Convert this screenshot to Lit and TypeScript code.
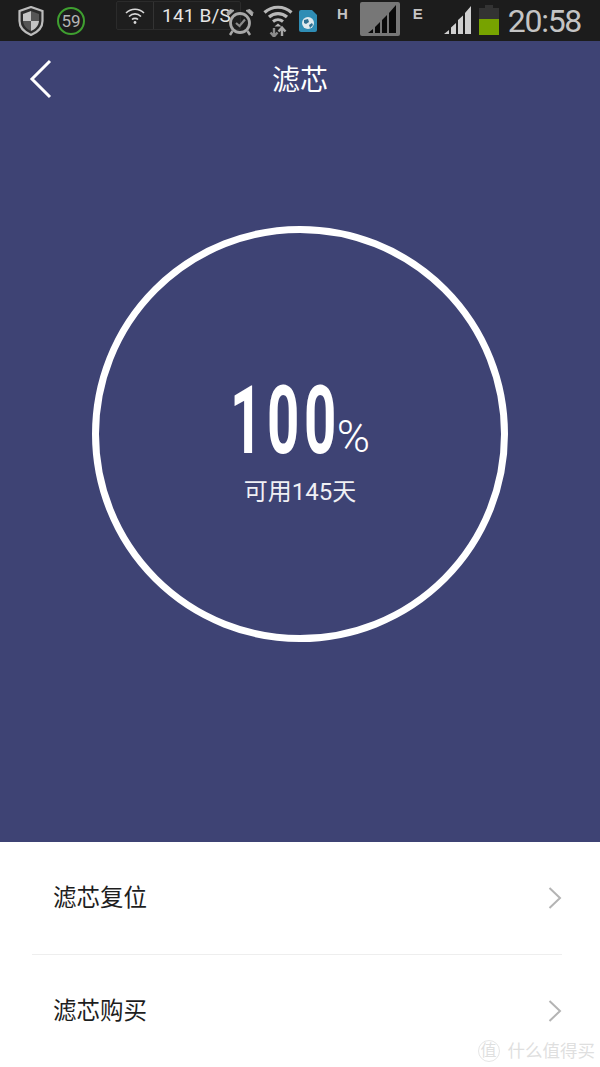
import { LitElement, html, css, svg } from 'lit';
import { customElement } from 'lit/decorators.js';

const shield = svg`<svg class="ic" width="26" height="30" viewBox="0 0 26 30">
  <path d="M13 1 L24.5 5 V15 C24.5 22 19 26.5 13 29 C7 26.5 1.5 22 1.5 15 V5 Z" fill="#2a2a2a" stroke="#bdbdbd" stroke-width="2.2"/>
  <path d="M13 5 L5 8 V15 H13 Z" fill="#c4c4c4"/>
  <path d="M13 5 L21 8 V15 H13 Z" fill="#555"/>
  <path d="M5 15 H13 V25 C9 23.5 5.5 20 5 15 Z" fill="#555"/>
  <path d="M21 15 H13 V25 C17 23.5 20.5 20 21 15 Z" fill="#c4c4c4"/>
</svg>`;

const wifiSmall = svg`<svg width="20" height="18" viewBox="0 0 20 18" fill="none" stroke="#d8d8d8" stroke-width="1.6">
  <path d="M1 6 C6 1 14 1 19 6"/><path d="M4 9.5 C7.5 6 12.5 6 16 9.5"/><path d="M7 12.5 C8.5 11 11.5 11 13 12.5"/>
  <circle cx="10" cy="15.5" r="1.4" fill="#d8d8d8" stroke="none"/>
</svg>`;

const alarm = svg`<svg class="ic" width="28" height="28" viewBox="0 0 28 28" fill="none" stroke="#a8a8a8">
  <circle cx="14" cy="15" r="9.5" stroke-width="2.8"/>
  <path d="M2 8 L8 2.5 L4 1.5 L1 4.5 Z M26 8 L20 2.5 L24 1.5 L27 4.5 Z" fill="#a8a8a8" stroke-width="1"/>
  <path d="M10 15 L13.5 18 L19 11.5" stroke-width="2.2" stroke="#8a8a8a"/>
  <path d="M6.5 23 L4 27 M21.5 23 L24 27" stroke-width="2.4"/>
</svg>`;

const wifiTransfer = svg`<svg class="ic" width="30" height="32" viewBox="0 0 30 32" fill="none" stroke="#b8b8b8">
  <path d="M1.5 7.5 C9 0.5 21 0.5 28.5 7.5" stroke-width="3.2"/>
  <path d="M6 12 C11 7.5 19 7.5 24 12" stroke-width="3.2"/>
  <path d="M10 16.5 C13 14 17 14 20 16.5" stroke-width="3"/>
  <path d="M15 18.5 L11.5 21.5 H18.5 Z" fill="#b8b8b8" stroke="none"/>
  <path d="M11 23 V31 M7.5 27.5 L11 31.5 L14.5 27.5" stroke="#8c8c8c" stroke-width="2.4"/>
  <path d="M19 31 V23 M15.5 26.5 L19 22.5 L22.5 26.5" stroke="#a8a8a8" stroke-width="2.4"/>
</svg>`;

const sdGlobe = svg`<svg class="ic" width="20" height="24" viewBox="0 0 20 24">
  <path d="M1 3 Q1 1 3 1 H14 L19 6 V21 Q19 23 17 23 H3 Q1 23 1 21 Z" fill="#2f8db5"/>
  <circle cx="10" cy="14" r="6" fill="#dfe9ee"/>
  <path d="M6 11 L10 10 L11 13 L8 15 L6 14 Z M11 16 L14 14 L15 16 L12 19 Z" fill="#2f6f90"/>
</svg>`;

const cellBox = svg`<svg width="40" height="34" viewBox="0 0 40 34">
  <rect width="40" height="34" rx="2" fill="#777"/>
  <path d="M8 31 L13 27 V31 Z M15 31 V25 L20 20 V31 Z M22 31 V18 L27 13 V31 Z M29 31 V11 L36 3 V31 Z" fill="#0a0a0a"/>
</svg>`;

const signal = svg`<svg width="28" height="28" viewBox="0 0 28 28" fill="#cfcfcf">
  <path d="M0 28 L5 24 V28 Z M7 28 V21.5 L12 17 V28 Z M14 28 V14 L19 9.5 V28 Z M21 28 V7 L27 0 V28 Z"/>
</svg>`;

const battery = svg`<svg width="20" height="30" viewBox="0 0 20 30">
  <rect x="6" y="0" width="8" height="4" fill="#333"/>
  <rect y="3" width="20" height="27" fill="#333"/>
  <rect y="14" width="20" height="16" fill="#77a300"/>
</svg>`;

const chevron = svg`<svg width="14" height="22" viewBox="0 0 14 22" fill="none" stroke="#b4b4b4" stroke-width="2">
  <path d="M1.5 1 L12 11 L1.5 21"/>
</svg>`;

@customElement('app-root')
export class AppRoot extends LitElement {
  static styles = css`
    :host {
      display: block;
      width: 600px;
      height: 1067px;
      overflow: hidden;
      position: relative;
      background: #fff;
      font-family: Roboto, 'Noto Sans CJK SC', sans-serif;
    }
    .status {
      height: 41px;
      background: #1c1c1c;
      position: relative;
      display: flex;
      align-items: center;
      padding-left: 18px;
      box-sizing: border-box;
    }
    .ic {
      display: block;
      flex: none;
    }
    .badge {
      width: 28px;
      height: 28px;
      box-sizing: border-box;
      margin-left: 13px;
      border: 2.5px solid #3f9f30;
      border-radius: 50%;
      color: #b4b4b4;
      font-size: 17px;
      display: flex;
      align-items: center;
      justify-content: center;
    }
    .speed {
      position: absolute;
      left: 116px;
      top: 1px;
      width: 125px;
      height: 29px;
      box-sizing: border-box;
      background: #1e1e1e;
      border: 1px solid #2b2b2b;
      border-radius: 2px;
      display: flex;
      align-items: center;
      color: #e6e6e6;
      font-size: 19px;
    }
    .speed .wifi {
      width: 36px;
      display: flex;
      justify-content: center;
      border-right: 1px solid #333;
      height: 27px;
      align-items: center;
    }
    .speed .rate {
      margin-left: 8px;
      white-space: nowrap;
      letter-spacing: 0.2px;
    }
    .alarm {
      margin-left: 141px;
      margin-top: 3px;
      position: relative;
      z-index: 1;
    }
    .wifi-t {
      margin-left: 9px;
    }
    .sd {
      margin-left: 5px;
      margin-top: 1px;
    }
    .net {
      color: #c4c4c4;
      font: 700 15px 'Liberation Sans', sans-serif;
      align-self: flex-start;
      margin-top: 5px;
    }
    .net.h {
      margin-left: 19px;
    }
    .net.e {
      margin-left: 13px;
    }
    .cell {
      margin-left: 12px;
      display: block;
      flex: none;
    }
    .sig {
      margin-left: 21px;
      margin-top: 3px;
      display: block;
      flex: none;
    }
    .bat {
      margin-left: 7px;
      margin-top: 2px;
      display: block;
      flex: none;
    }
    .time {
      margin-left: 9px;
      color: #c4c4c4;
      font-size: 32px;
      letter-spacing: -1.3px;
      white-space: nowrap;
    }
    .hero {
      height: 801px;
      background: #3e4374;
      box-sizing: border-box;
      position: relative;
      display: flex;
      justify-content: center;
      padding-top: 185px;
    }
    .back {
      position: absolute;
      left: 29px;
      top: 18px;
    }
    .title {
      position: absolute;
      left: 0;
      right: 0;
      top: 21px;
      text-align: center;
      color: #fff;
      font-size: 28px;
      line-height: 38px;
    }
    .ring {
      width: 416px;
      height: 416px;
      box-sizing: border-box;
      border: 7px solid #fff;
      border-radius: 50%;
      display: flex;
      flex-direction: column;
      align-items: center;
      color: #fff;
      padding-top: 152px;
    }
    .value {
      display: flex;
      align-items: flex-end;
      height: 72px;
    }
    .num {
      font-size: 94px;
      line-height: 72px;
      font-weight: 700;
      letter-spacing: 7.7px;
      display: block;
      width: 107px;
      white-space: nowrap;
      transform: scaleX(0.6);
      transform-origin: left center;
    }
    .num .last {
      letter-spacing: 0;
    }
    .pct {
      font-size: 45px;
      line-height: 41px;
      font-weight: 300;
    }
    .sub {
      margin-top: 20px;
      font-size: 24px;
      line-height: 30px;
      color: #f0f0f4;
    }
    .list {
      height: 225px;
      padding: 0 38px 0 32px;
    }
    .row {
      height: 112px;
      display: flex;
      align-items: center;
      justify-content: space-between;
      padding-left: 21px;
      color: #1e1e1e;
      font-size: 23.5px;
    }
    .row span {
      margin-bottom: 5px;
    }
    .row + .row {
      border-top: 1px solid #eeeeee;
    }
    .row svg {
      display: block;
    }
    .mark {
      position: absolute;
      right: 5px;
      bottom: 5px;
      display: flex;
      align-items: center;
      gap: 8px;
      color: #dfdfdf;
      font-size: 17.5px;
      line-height: 22px;
    }
    .mark .logo {
      width: 22px;
      height: 22px;
      box-sizing: border-box;
      border: 1px solid #e6e6e6;
      border-radius: 50%;
      font-size: 16px;
      display: flex;
      align-items: center;
      justify-content: center;
    }
  `;

  render() {
    return html`
      <div class="status">
        ${shield}
        <div class="badge">59</div>
        <div class="alarm">${alarm}</div>
        <div class="wifi-t">${wifiTransfer}</div>
        <div class="sd">${sdGlobe}</div>
        <span class="net h">H</span>
        <div class="cell">${cellBox}</div>
        <span class="net e">E</span>
        <div class="sig">${signal}</div>
        <div class="bat">${battery}</div>
        <span class="time">20:58</span>
        <div class="speed">
          <div class="wifi">${wifiSmall}</div>
          <span class="rate">141 B/S</span>
        </div>
      </div>
      <div class="hero">
        <svg class="back" width="24" height="40" viewBox="0 0 24 40" fill="none" stroke="#fff" stroke-width="3">
          <path d="M21 2 L3 20 L21 38" />
        </svg>
        <div class="title">滤芯</div>
        <div class="ring">
          <div class="value">
            <span class="num">10<span class="last">0</span></span>
            <span class="pct">%</span>
          </div>
          <div class="sub">可用145天</div>
        </div>
      </div>
      <div class="list">
        <div class="row"><span>滤芯复位</span>${chevron}</div>
        <div class="row"><span>滤芯购买</span>${chevron}</div>
      </div>
      <div class="mark">
        <span class="logo">值</span>
        <span>什么值得买</span>
      </div>
    `;
  }
}
